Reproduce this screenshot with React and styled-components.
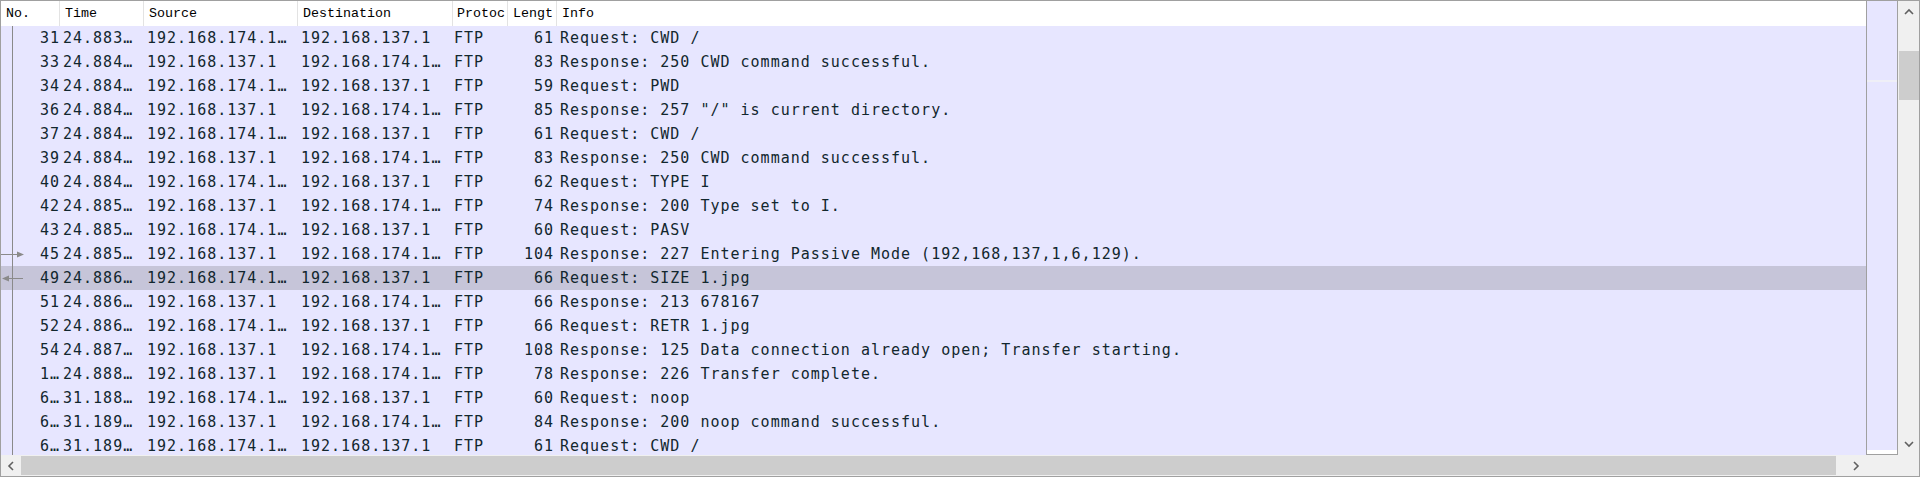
import React from 'react';
import styled, { createGlobalStyle } from 'styled-components';

const ROW_BG = '#e7e6ff';
const SEL_BG = '#c6c5d9';
const COLS = '59px 84px 154px 155px 55px 49px 1fr';

const GlobalStyle = createGlobalStyle`
  html, body {
    margin: 0;
    padding: 0;
    background: #fff;
  }
  body {
    width: 1920px;
    height: 477px;
    overflow: hidden;
  }
`;

const Frame = styled.div`
  box-sizing: border-box;
  width: 1920px;
  height: 477px;
  border: 1px solid #a0a0a0;
  display: grid;
  grid-template-columns: 1865px 32px 21px;
  grid-template-rows: 454px 21px;
  background: #fff;
  overflow: hidden;
`;

const ListPane = styled.div`
  display: flex;
  flex-direction: column;
  overflow: hidden;
  min-width: 0;
  background: ${ROW_BG};
`;

const HeaderRow = styled.div`
  display: grid;
  grid-template-columns: ${COLS};
  height: 25px;
  flex: none;
  background: #fff;
  font-family: "Liberation Mono", "DejaVu Sans Mono", monospace;
  font-size: 13.33px;
  color: #000;
`;

const HeaderCell = styled.div`
  box-sizing: border-box;
  border-right: ${p => (p.$last ? 'none' : '1px solid #e3e3e3')};
  padding: 1px 0 0 ${p => p.$pad}px;
  line-height: 24px;
  white-space: nowrap;
  overflow: hidden;
`;

const PacketRow = styled.div`
  display: grid;
  grid-template-columns: ${COLS};
  height: 24px;
  flex: none;
  background: ${p => (p.$selected ? SEL_BG : ROW_BG)};
  color: #12272e;
  font-family: "DejaVu Sans Mono", "Liberation Mono", monospace;
  font-size: 15px;
  letter-spacing: 1px;
`;

const Cell = styled.div`
  box-sizing: border-box;
  white-space: nowrap;
  overflow: hidden;
  line-height: 23px;
  padding-top: 1px;
  padding-left: ${p => (p.$right ? 0 : p.$pad)}px;
  padding-right: ${p => (p.$right ? p.$pad : 0)}px;
  text-align: ${p => (p.$right ? 'right' : 'left')};
`;

const NoCell = styled.div`
  display: flex;
  align-items: stretch;
  overflow: hidden;
  white-space: nowrap;
`;

const NoText = styled.span`
  flex: 1;
  text-align: right;
  line-height: 23px;
  padding-top: 1px;
  margin-right: 0;
`;

const Minimap = styled.div`
  box-sizing: border-box;
  border-left: 1px solid #a0a0a0;
  border-right: 1px solid #a0a0a0;
  border-bottom: 1px solid #a0a0a0;
  background: ${ROW_BG};
  display: flex;
  flex-direction: column;
`;

const MinimapGap = styled.div`
  flex: ${p => (p.$grow ? 1 : 'none')};
  height: ${p => (p.$grow ? 'auto' : `${p.$h}px`)};
`;

const MinimapMark = styled.div`
  height: 2px;
  background: #efeff7;
  flex: none;
`;

const MinimapEnd = styled.div`
  height: 4px;
  background: #fff;
  flex: none;
`;

const VScroll = styled.div`
  background: #f0f0f0;
  display: flex;
  flex-direction: column;
`;

const HScroll = styled.div`
  background: #f0f0f0;
  display: flex;
  align-items: stretch;
`;

const Corner = styled.div`
  grid-column: 2 / 4;
  background: #f0f0f0;
`;

const ArrowButton = styled.div`
  flex: none;
  display: flex;
  align-items: center;
  justify-content: center;
  width: ${p => (p.$vertical ? 'auto' : `${p.$size}px`)};
  height: ${p => (p.$vertical ? `${p.$size}px` : 'auto')};
`;

const VTrack = styled.div`
  flex: 1;
  padding: 28px 0 0 1px;
`;

const HTrack = styled.div`
  flex: 1;
  padding: 1px 0;
`;

const VThumb = styled.div`
  width: 20px;
  height: 49px;
  background: #cdcdcd;
`;

const HThumb = styled.div`
  width: 1815px;
  height: 100%;
  background: #cdcdcd;
`;

const Chevron = ({ dir }) => {
  const pts = {
    up: '1,6 5,2 9,6',
    down: '1,2 5,6 9,2',
    left: '6,1 2,5 6,9',
    right: '2,1 6,5 2,9',
  }[dir];
  const vertical = dir === 'up' || dir === 'down';
  return (
    <svg width={vertical ? 10 : 8} height={vertical ? 8 : 10} viewBox={vertical ? '0 0 10 8' : '0 0 8 10'}>
      <polyline points={pts} fill="none" stroke="#606060" strokeWidth="1.6" />
    </svg>
  );
};

const RelationMark = ({ arrow }) => (
  <svg width="24" height="24" viewBox="0 0 24 24" style={{ flex: 'none' }}>
    <line x1="11.5" y1="0" x2="11.5" y2="24" stroke="#8a8a8a" strokeWidth="1" />
    {arrow === 'out' && (
      <>
        <line x1="-1" y1="12.5" x2="18" y2="12.5" stroke="#8a8a8a" strokeWidth="1" />
        <polygon points="16,9.5 23,12.5 16,15.5" fill="#8a8a8a" />
      </>
    )}
    {arrow === 'in' && (
      <>
        <line x1="6" y1="12.5" x2="22" y2="12.5" stroke="#8a8a8a" strokeWidth="1" />
        <polygon points="1,12.5 8,9.5 8,15.5" fill="#8a8a8a" />
      </>
    )}
  </svg>
);

const A = '192.168.174.1…';
const B = '192.168.137.1';

const packets = [
  ['31', '24.883…', A, B, '61', 'Request: CWD /'],
  ['33', '24.884…', B, A, '83', 'Response: 250 CWD command successful.'],
  ['34', '24.884…', A, B, '59', 'Request: PWD'],
  ['36', '24.884…', B, A, '85', 'Response: 257 "/" is current directory.'],
  ['37', '24.884…', A, B, '61', 'Request: CWD /'],
  ['39', '24.884…', B, A, '83', 'Response: 250 CWD command successful.'],
  ['40', '24.884…', A, B, '62', 'Request: TYPE I'],
  ['42', '24.885…', B, A, '74', 'Response: 200 Type set to I.'],
  ['43', '24.885…', A, B, '60', 'Request: PASV'],
  ['45', '24.885…', B, A, '104', 'Response: 227 Entering Passive Mode (192,168,137,1,6,129).', 'out'],
  ['49', '24.886…', A, B, '66', 'Request: SIZE 1.jpg', 'in', true],
  ['51', '24.886…', B, A, '66', 'Response: 213 678167'],
  ['52', '24.886…', A, B, '66', 'Request: RETR 1.jpg'],
  ['54', '24.887…', B, A, '108', 'Response: 125 Data connection already open; Transfer starting.'],
  ['1…', '24.888…', B, A, '78', 'Response: 226 Transfer complete.'],
  ['6…', '31.188…', A, B, '60', 'Request: noop'],
  ['6…', '31.189…', B, A, '84', 'Response: 200 noop command successful.'],
  ['6…', '31.189…', A, B, '61', 'Request: CWD /'],
];

const headers = [
  ['No.', 5],
  ['Time', 5],
  ['Source', 5],
  ['Destination', 5],
  ['Protoc', 4],
  ['Lengt', 5],
  ['Info', 5],
];

const App = () => (
  <>
    <GlobalStyle />
    <Frame>
      <ListPane>
        <HeaderRow>
          {headers.map(([label, pad], i) => (
            <HeaderCell key={label} $pad={pad} $last={i === headers.length - 1}>
              {label}
            </HeaderCell>
          ))}
        </HeaderRow>
        {packets.map(([no, time, src, dst, len, info, arrow, selected], i) => (
          <PacketRow key={i} $selected={selected}>
            <NoCell>
              <RelationMark arrow={arrow} />
              <NoText>{no}</NoText>
            </NoCell>
            <Cell $pad={3}>{time}</Cell>
            <Cell $pad={3}>{src}</Cell>
            <Cell $pad={3}>{dst}</Cell>
            <Cell $pad={1}>FTP</Cell>
            <Cell $right $pad={3}>{len}</Cell>
            <Cell $pad={3}>{info}</Cell>
          </PacketRow>
        ))}
      </ListPane>
      <Minimap>
        <MinimapGap $h={79} />
        <MinimapMark />
        <MinimapGap $grow />
        <MinimapEnd />
      </Minimap>
      <VScroll>
        <ArrowButton $vertical $size={22}><Chevron dir="up" /></ArrowButton>
        <VTrack><VThumb /></VTrack>
        <ArrowButton $vertical $size={22}><Chevron dir="down" /></ArrowButton>
      </VScroll>
      <HScroll>
        <ArrowButton $size={20}><Chevron dir="left" /></ArrowButton>
        <HTrack><HThumb /></HTrack>
        <ArrowButton $size={21}><Chevron dir="right" /></ArrowButton>
      </HScroll>
      <Corner />
    </Frame>
  </>
);

export default App;
